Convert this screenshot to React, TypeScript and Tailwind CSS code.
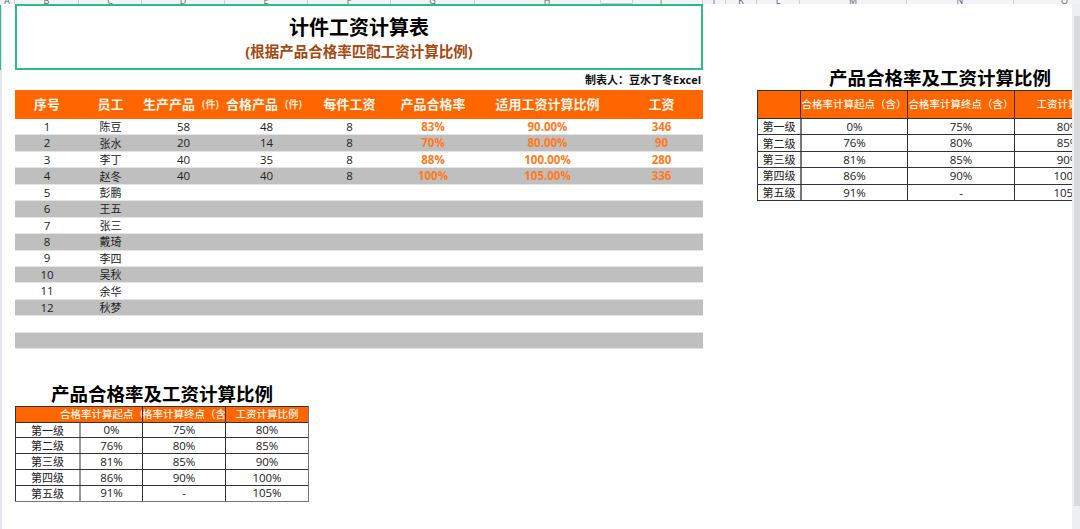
import { clsx } from "clsx";

const columnLetters = [
  { label: "A", width: "w-[15px]" },
  { label: "B", width: "w-[64px]" },
  { label: "C", width: "w-[63px]" },
  { label: "D", width: "w-[83px]" },
  { label: "E", width: "w-[83px]" },
  { label: "F", width: "w-[83px]" },
  { label: "G", width: "w-[84px]" },
  { label: "H", width: "w-[145px]" },
  { label: "I", width: "w-[83px]" },
  { label: "J", width: "w-[23px]" },
  { label: "K", width: "w-[31px]" },
  { label: "L", width: "w-[43px]" },
  { label: "M", width: "w-[107px]" },
  { label: "N", width: "w-[107px]" },
  { label: "O", width: "w-[102px]" },
];

const mainHeaders = [
  { title: "序号" },
  { title: "员工" },
  { title: "生产产品", unit: "(件)" },
  { title: "合格产品", unit: "(件)" },
  { title: "每件工资" },
  { title: "产品合格率" },
  { title: "适用工资计算比例" },
  { title: "工资" },
];

const employees = [
  ["1", "陈豆", "58", "48", "8", "83%", "90.00%", "346"],
  ["2", "张水", "20", "14", "8", "70%", "80.00%", "90"],
  ["3", "李丁", "40", "35", "8", "88%", "100.00%", "280"],
  ["4", "赵冬", "40", "40", "8", "100%", "105.00%", "336"],
  ["5", "彭鹏"],
  ["6", "王五"],
  ["7", "张三"],
  ["8", "戴琦"],
  ["9", "李四"],
  ["10", "吴秋"],
  ["11", "余华"],
  ["12", "秋梦"],
  [],
  [],
];

const grades = [
  ["第一级", "0%", "75%", "80%"],
  ["第二级", "76%", "80%", "85%"],
  ["第三级", "81%", "85%", "90%"],
  ["第四级", "86%", "90%", "100%"],
  ["第五级", "91%", "-", "105%"],
];

const mainCols = "grid grid-cols-[64px_63px_83px_83px_83px_84px_145px_83px]";

function MainTable() {
  return (
    <div className="w-[688px]">
      <div className={clsx(mainCols, "h-[29px] items-center bg-[#ff6600] text-[13px] font-bold text-[#fff4ea]")}>
        {mainHeaders.map((h) => (
          <div
            key={h.title}
            className={clsx("flex items-center justify-center gap-[7px] whitespace-nowrap", h.unit && "pr-[5px]")}
          >
            {h.title}
            {h.unit && <span className="text-[10px] font-bold text-[#ffe3cc]">{h.unit}</span>}
          </div>
        ))}
      </div>
      {employees.map((row, i) => (
        <div
          key={i}
          className={clsx(
            mainCols,
            "h-[16.45px] items-center border-b border-[#e4e4e4] text-[11.5px] leading-none text-[#222]",
            i % 2 === 1 ? "bg-[#bfbfbf]" : "bg-white",
          )}
        >
          {Array.from({ length: 8 }).map((_, c) => (
            <div
              key={c}
              className={clsx("text-center", c === 1 && "text-[11px]", c >= 5 && "font-bold text-[#ff7a1a]")}
            >
              {row[c] ?? ""}
            </div>
          ))}
        </div>
      ))}
    </div>
  );
}

function LowerTable() {
  const cols = "grid grid-cols-[63px_63px_83px_83px]";
  return (
    <div className="w-[294px] border-r border-b border-[#777]">
      <div className="grid h-[15.5px] grid-cols-[126px_83px_83px] border-t border-l border-[#333] bg-[#ff6600] text-[10.5px] font-medium leading-none text-[#fff4ea]">
        <div className="flex items-center overflow-hidden whitespace-nowrap pl-[44px]">合格率计算起点（含）</div>
        <div className="flex items-center justify-center overflow-hidden whitespace-nowrap border-l border-[#333]">合格率计算终点（含）</div>
        <div className="flex items-center justify-center whitespace-nowrap border-l border-[#333]">工资计算比例</div>
      </div>
      {grades.map((row) => (
        <div key={row[0]} className={clsx(cols, "h-[15.8px] items-center border-t border-l border-[#333] text-[11.5px] leading-none text-[#222]")}>
          {row.map((v, c) => (
            <div
              key={c}
              className={clsx(
                "flex h-full items-center justify-center",
                c === 0 && "text-[11px]",
                c === 1 && "border-l-2 border-[#999]",
                c > 1 && "border-l border-[#333]",
              )}
            >
              {v}
            </div>
          ))}
        </div>
      ))}
    </div>
  );
}

function SideTable() {
  const cols = "grid grid-cols-[42px_107px_107px_107px]";
  return (
    <div className="w-[364px] border-b border-[#333]">
      <div className={clsx(cols, "h-[28px] border-t border-l border-[#333] bg-[#ff6600] text-[10.5px] font-medium leading-none text-[#fff4ea]")}>
        <div />
        <div className="flex items-center justify-center whitespace-nowrap border-l border-[#333]">合格率计算起点（含）</div>
        <div className="flex items-center justify-center whitespace-nowrap border-l border-[#333]">合格率计算终点（含）</div>
        <div className="flex items-center justify-center whitespace-nowrap border-l border-[#333]">工资计算比例</div>
      </div>
      {grades.map((row) => (
        <div key={row[0]} className={clsx(cols, "h-[16.4px] items-center border-t border-l border-[#333] text-[11.5px] leading-none text-[#222]")}>
          {row.map((v, c) => (
            <div
              key={c}
              className={clsx(
                "flex h-full items-center justify-center",
                c === 0 && "text-[11px]",
                c === 1 && "border-l-2 border-[#777]",
                c > 1 && "border-l border-[#333]",
              )}
            >
              {v}
            </div>
          ))}
        </div>
      ))}
    </div>
  );
}

export default function App() {
  return (
    <div className="flex h-[529px] w-[1080px] flex-col overflow-hidden bg-white font-['Open_Sans','Noto_Sans_CJK_SC',sans-serif]">
      {/* column letters, mostly cut off by the crop */}
      <div className="relative flex h-[4px] shrink-0 overflow-hidden bg-[#f1f3f8]">
        {columnLetters.map((c) => (
          <div
            key={c.label}
            className={clsx(c.width, "flex h-[4px] shrink-0 items-end justify-center overflow-hidden border-r border-[#c9ccd3] text-[9px] leading-[6px] text-[#666]")}
          >
            {c.label}
          </div>
        ))}
        <div className="absolute left-[600px] top-0 h-[4px] w-[33px] rounded-b-[2px] border-x border-b border-[#c9ccd3] bg-[#f7f7f7]" />
      </div>

      <div className="flex min-h-0 flex-1">
        {/* row header sliver */}
        <div className="w-[2px] shrink-0 bg-[#e2e6ef]">
          <div className="mt-[1px] h-[65px] w-[1px] bg-[#2cbd85]" />
        </div>

        <div className="ml-[13px] w-[688px] shrink-0">
          <div className="flex h-[66px] flex-col items-center border-2 border-[#2cbd85] pt-[8px]">
            <div className="text-[20px] font-bold leading-[28px] text-black">计件工资计算表</div>
            <div className="text-[14.5px] font-bold leading-[19px] text-[#a5480f]">(根据产品合格率匹配工资计算比例)</div>
          </div>
          <div className="flex h-[20px] items-center justify-end pr-[2px] text-[11px] font-bold text-[#111]">
            制表人：豆水丁冬Excel
          </div>
          <MainTable />
          <div className="mt-[32px] flex h-[25px] w-[294px] items-center justify-center text-[18.5px] font-bold text-black">
            产品合格率及工资计算比例
          </div>
          <LowerTable />
        </div>

        <div className="ml-[54px] min-w-0 w-[315px] shrink-0 overflow-hidden">
          <div className="mt-[62px] flex h-[24px] w-[364px] items-center pl-[72px] text-[18.5px] font-bold text-black whitespace-nowrap">
            产品合格率及工资计算比例
          </div>
          <SideTable />
        </div>

        {/* scrollbar */}
        <div className="ml-auto flex w-[8px] shrink-0 flex-col bg-[#eeeff3]">
          <div className="ml-[2px] mt-[12px] h-[490px] bg-[#d8dade]" />
        </div>
      </div>
    </div>
  );
}
